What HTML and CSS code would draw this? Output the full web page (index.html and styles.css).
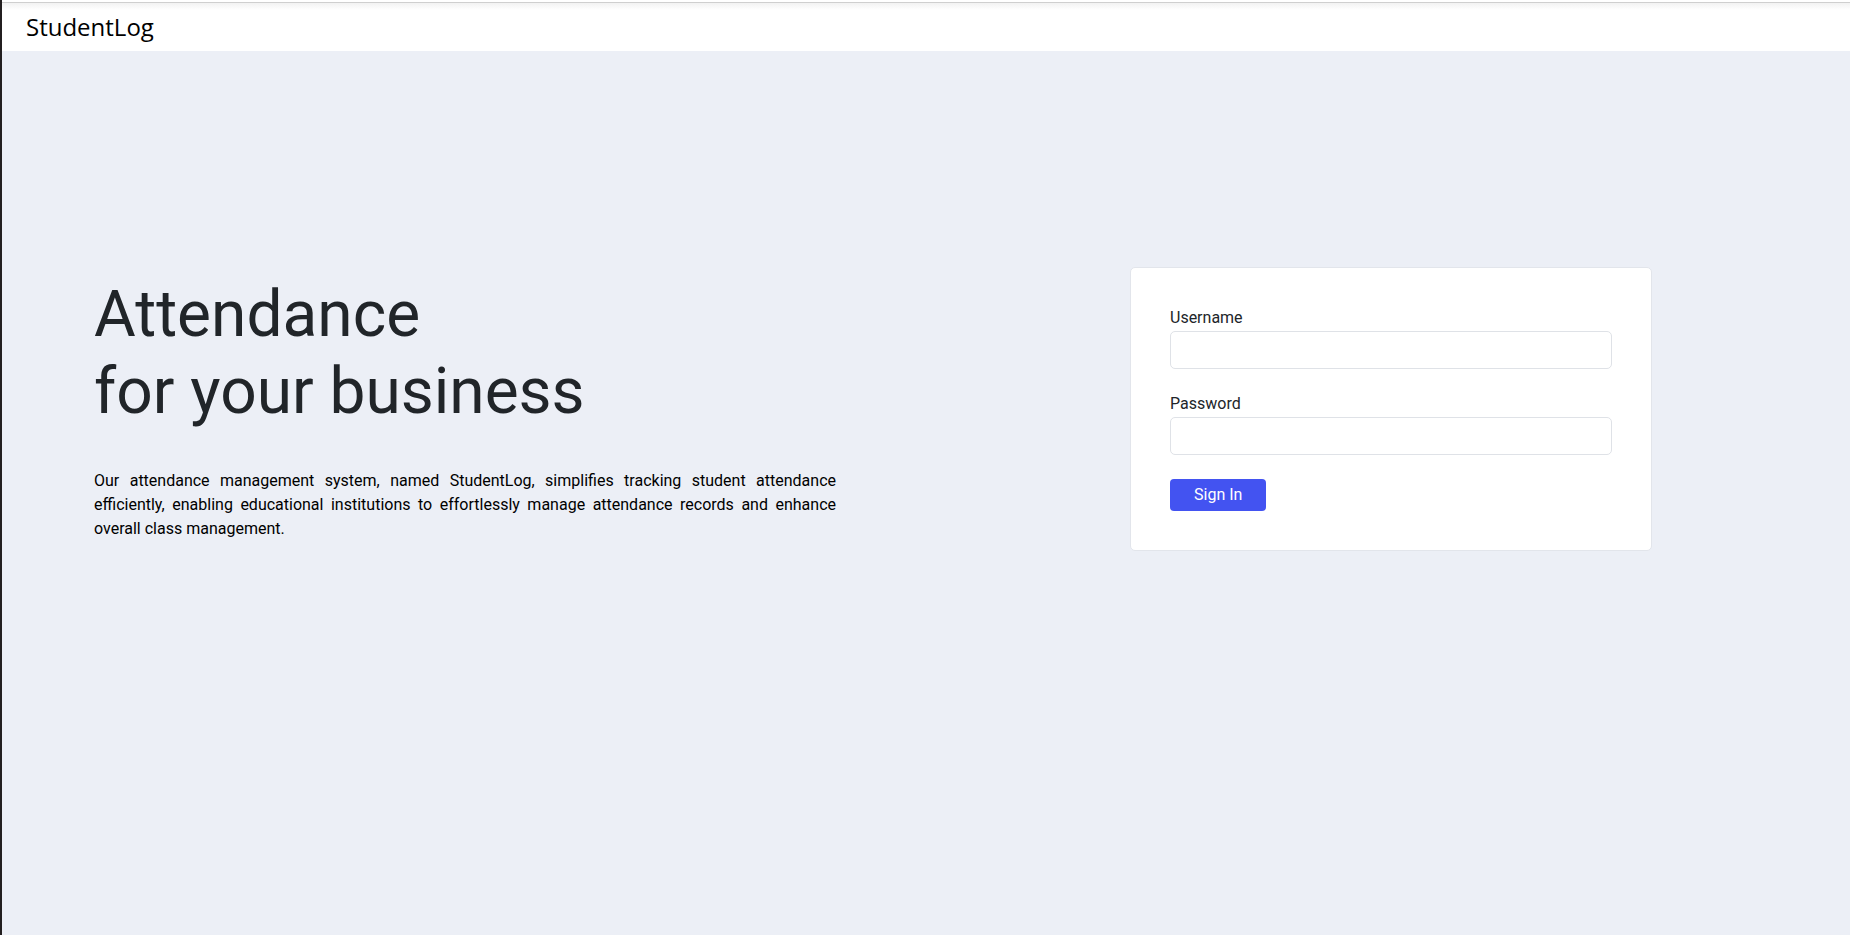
FILE: index.html
```html
<!DOCTYPE html>
<html lang="en">
<head>
<meta charset="utf-8">
<title>StudentLog</title>
<link rel="stylesheet" href="styles.css">
</head>
<body>
<div class="page">
  <header class="topbar">
    <span class="brand">StudentLog</span>
  </header>
  <main class="hero">
    <section class="intro">
      <h1 class="display">Attendance<br>for your business</h1>
      <p class="lead">Our attendance management system, named StudentLog, simplifies tracking student attendance efficiently, enabling educational institutions to effortlessly manage attendance records and enhance overall class management.</p>
    </section>
    <form class="card">
      <div class="field">
        <label class="label" for="username">Username</label>
        <input class="input" id="username" type="text">
      </div>
      <div class="field">
        <label class="label" for="password">Password</label>
        <input class="input" id="password" type="password">
      </div>
      <button class="btn" type="button">Sign In</button>
    </form>
  </main>
</div>
</body>
</html>
```
FILE: styles.css
```css
* { box-sizing: border-box; }
html, body { margin: 0; padding: 0; height: 100%; }
body {
  font-family: Roboto, "Liberation Sans", sans-serif;
  font-size: 16px;
  line-height: 1.5;
  color: #212529;
  background: #eceff6;
}
.page {
  min-height: 100vh;
  border-left: 2px solid #231f20;
  background: #eceff6;
}
.topbar {
  height: 51px;
  display: flex;
  align-items: center;
  padding: 3px 0 0 24px;
  background: linear-gradient(#ffffff 0 2px, #cfcfcf 2px 3px, #f2f2f2 3px, #ffffff 10px);
}
.brand {
  font-family: "Open Sans", "DejaVu Sans", sans-serif;
  font-size: 24px;
  line-height: 1;
  color: #000;
}
.hero {
  display: flex;
  align-items: center;
  justify-content: space-between;
  padding: 216px 198px 0 92px;
}
.intro { width: 742px; }
.display {
  margin: 0 0 39px;
  font-size: 64px;
  font-weight: 400;
  line-height: 1.2;
  color: #212529;
}
.lead {
  margin: 0;
  text-align: justify;
  color: #000;
  line-height: 24px;
}
.card {
  width: 522px;
  background: #fff;
  border: 1px solid #e2e5eb;
  border-radius: 5px;
  padding: 38px 39px 39px;
  display: flex;
  flex-direction: column;
  align-items: flex-start;
}
.field {
  width: 100%;
  display: flex;
  flex-direction: column;
  margin-bottom: 23px;
}
.field + .field { margin-bottom: 24px; }
.label {
  line-height: 24px;
  margin-bottom: 1px;
  color: #212529;
}
.input {
  width: 100%;
  height: 38px;
  border: 1px solid #dfe2e7;
  border-radius: 5px;
  background: #fff;
  font: inherit;
  padding: 6px 12px;
}
.btn {
  height: 32px;
  padding: 0 24px;
  border: none;
  border-radius: 4px;
  background: #4353f1;
  color: #fff;
  font: inherit;
  line-height: 32px;
}
```
